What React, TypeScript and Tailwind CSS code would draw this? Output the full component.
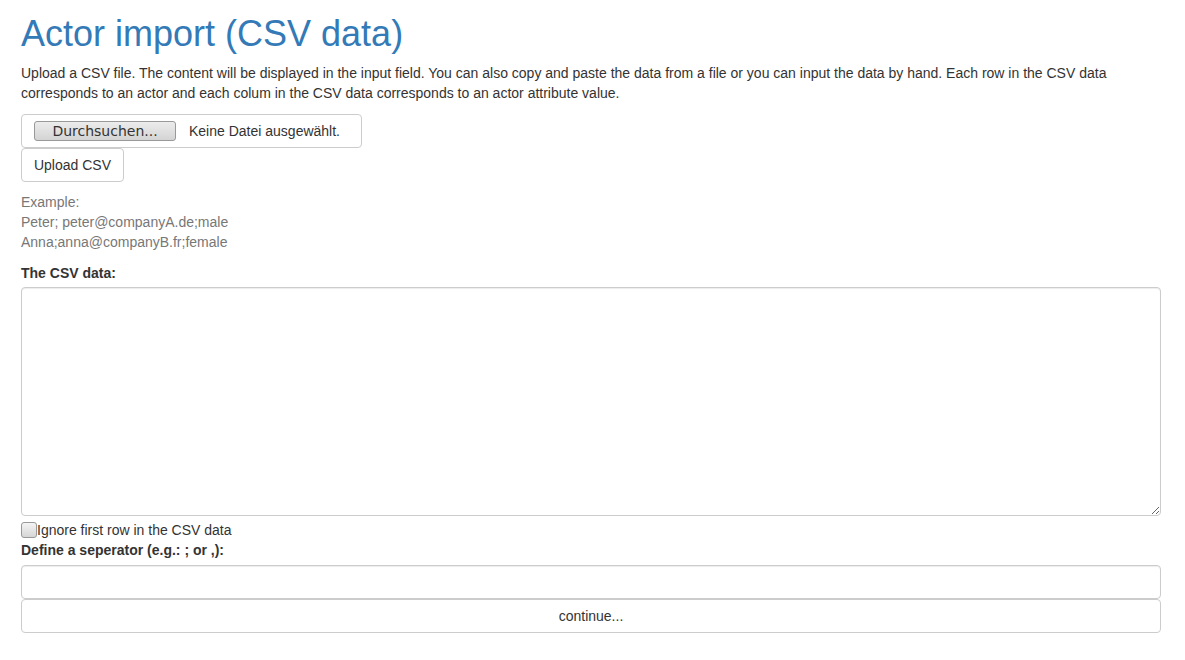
export default function App() {
  return (
    <div className="min-h-[660px] bg-white pl-[21px] pr-[24px] pt-[14px] font-['Liberation_Sans',Arial,sans-serif] text-[14px] leading-[20px] text-[#333]">
      <h1 className="mb-[9px] text-[36px] leading-[40px] font-normal text-[#337ab7]">Actor import (CSV data)</h1>
      <p className="mb-[11px]">
        Upload a CSV file. The content will be displayed in the input field. You can also copy and paste the data from a file or you can input the data by hand. Each row in the CSV data corresponds to an actor and each colum in the CSV data corresponds to an actor attribute value.
      </p>

      <div className="flex h-[34px] w-[341px] items-center rounded-[4px] border border-[#ccc] pl-[12px]">
        <div className="flex h-[20px] w-[142px] items-center justify-center rounded-[3px] border border-[#999] bg-gradient-to-b from-[#ececec] to-[#d4d4d4] font-['DejaVu_Sans',sans-serif] text-[14px] text-[#333]">
          Durchsuchen...
        </div>
        <span className="ml-[13px]">Keine Datei ausgewählt.</span>
      </div>
      <button className="flex h-[34px] w-[103px] items-center justify-center rounded-[4px] border border-[#ccc] bg-white text-[#333]">
        Upload CSV
      </button>

      <div className="mt-[10px] text-[#777]">
        <div>Example:</div>
        <div>Peter; peter@companyA.de;male</div>
        <div>Anna;anna@companyB.fr;female</div>
      </div>

      <label className="mt-[11px] mb-[4px] block font-bold">The CSV data:</label>
      <textarea className="block h-[229px] w-full resize-y rounded-[4px] border border-[#ccc] shadow-[inset_0_1px_1px_rgba(0,0,0,0.075)] outline-none" />

      <div className="mt-[4px] flex h-[20px] items-center">
        <span className="h-[16px] w-[16px] rounded-[3px] border border-[#999] bg-gradient-to-b from-[#f4f4f4] to-[#d6d6d6]" />
        <span>Ignore first row in the CSV data</span>
      </div>
      <label className="block font-bold">Define a seperator (e.g.: ; or ,):</label>
      <input className="mt-[5px] block h-[34px] w-full rounded-[4px] border border-[#ccc] shadow-[inset_0_1px_1px_rgba(0,0,0,0.075)] outline-none" />
      <button className="flex h-[34px] w-full items-center justify-center rounded-[4px] border border-[#ccc] bg-white text-[#333]">
        continue...
      </button>
    </div>
  );
}
